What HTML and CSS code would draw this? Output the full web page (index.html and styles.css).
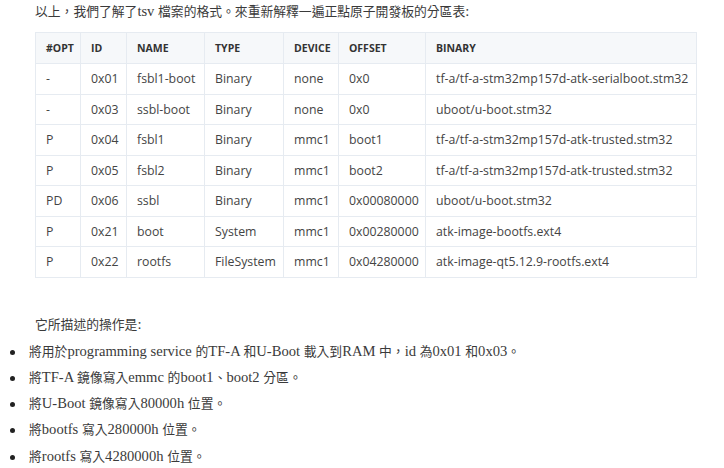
FILE: index.html
```html
<!DOCTYPE html>
<html lang="zh-Hant">
<head>
<meta charset="utf-8">
<link rel="stylesheet" href="styles.css">
</head>
<body>
<p class="intro">以上，我們了解了<span class="lt">tsv </span>檔案的格式。來重新解釋一遍正點原子開發板的分區表<span class="lt">:</span></p>
<table class="parts">
  <colgroup>
    <col class="c1"><col class="c2"><col class="c3"><col class="c4"><col class="c5"><col class="c6"><col class="c7">
  </colgroup>
  <thead>
    <tr><th>#OPT</th><th>ID</th><th>NAME</th><th>TYPE</th><th>DEVICE</th><th>OFFSET</th><th>BINARY</th></tr>
  </thead>
  <tbody>
    <tr><td>-</td><td>0x01</td><td>fsbl1-boot</td><td>Binary</td><td>none</td><td>0x0</td><td>tf-a/tf-a-stm32mp157d-atk-serialboot.stm32</td></tr>
    <tr><td>-</td><td>0x03</td><td>ssbl-boot</td><td>Binary</td><td>none</td><td>0x0</td><td>uboot/u-boot.stm32</td></tr>
    <tr><td>P</td><td>0x04</td><td>fsbl1</td><td>Binary</td><td>mmc1</td><td>boot1</td><td>tf-a/tf-a-stm32mp157d-atk-trusted.stm32</td></tr>
    <tr><td>P</td><td>0x05</td><td>fsbl2</td><td>Binary</td><td>mmc1</td><td>boot2</td><td>tf-a/tf-a-stm32mp157d-atk-trusted.stm32</td></tr>
    <tr><td>PD</td><td>0x06</td><td>ssbl</td><td>Binary</td><td>mmc1</td><td>0x00080000</td><td>uboot/u-boot.stm32</td></tr>
    <tr><td>P</td><td>0x21</td><td>boot</td><td>System</td><td>mmc1</td><td>0x00280000</td><td>atk-image-bootfs.ext4</td></tr>
    <tr><td>P</td><td>0x22</td><td>rootfs</td><td>FileSystem</td><td>mmc1</td><td>0x04280000</td><td>atk-image-qt5.12.9-rootfs.ext4</td></tr>
  </tbody>
</table>
<p class="lead">它所描述的操作是<span class="lt">:</span></p>
<ul class="ops">
  <li>將用於<span class="lt">programming service </span>的<span class="lt">TF-A </span>和<span class="lt">U-Boot </span>載入到<span class="lt">RAM </span>中，<span class="lt">id </span>為<span class="lt">0x01 </span>和<span class="lt">0x03</span>。</li>
  <li>將<span class="lt">TF-A </span>鏡像寫入<span class="lt">emmc </span>的<span class="lt">boot1</span>、<span class="lt">boot2 </span>分區。</li>
  <li>將<span class="lt">U-Boot </span>鏡像寫入<span class="lt">80000h </span>位置。</li>
  <li>將<span class="lt">bootfs </span>寫入<span class="lt">280000h </span>位置。</li>
  <li>將<span class="lt">rootfs </span>寫入<span class="lt">4280000h </span>位置。</li>
</ul>
</body>
</html>
```

FILE: styles.css
```css
html, body {
  margin: 0;
  padding: 0;
  background: #ffffff;
}
body {
  font-family: "Liberation Serif", "Noto Sans CJK TC", serif;
  font-size: 12.8px;
  color: #3a3a3a;
}
.lt {
  font-size: 14.6px;
  line-height: 1;
}
.intro {
  margin: 0;
  padding: 3px 0 0 35px;
  line-height: 18px;
}
.parts {
  margin: 11px 0 0 35px;
  border-collapse: collapse;
  table-layout: fixed;
  width: 661px;
  font-family: "Open Sans", "Noto Sans", sans-serif;
  color: #444;
}
.c1 { width: 45px; }
.c2 { width: 46px; }
.c3 { width: 78px; }
.c4 { width: 79px; }
.c5 { width: 55px; }
.c6 { width: 87px; }
.c7 { width: 271px; }
.parts th, .parts td {
  border: 1px solid #e6ebf1;
  text-align: left;
  padding: 0 10px;
  white-space: nowrap;
  overflow: hidden;
}
.parts th {
  background: #f6f8fa;
  font-size: 10.5px;
  font-weight: 700;
  color: #333;
  height: 30px;
}
.parts td {
  font-size: 12.3px;
  height: 29.5px;
}
.lead {
  margin: 37px 0 0 35px;
  line-height: 20px;
}
.ops {
  margin: 7px 0 0 0;
  padding: 0 0 0 29px;
  list-style: none;
}
.ops li {
  position: relative;
  line-height: 20px;
  margin-bottom: 6.3px;
}
.ops li::before {
  content: "";
  position: absolute;
  left: -19px;
  top: 8px;
  width: 5px;
  height: 5px;
  border-radius: 50%;
  background: #222;
}
```
